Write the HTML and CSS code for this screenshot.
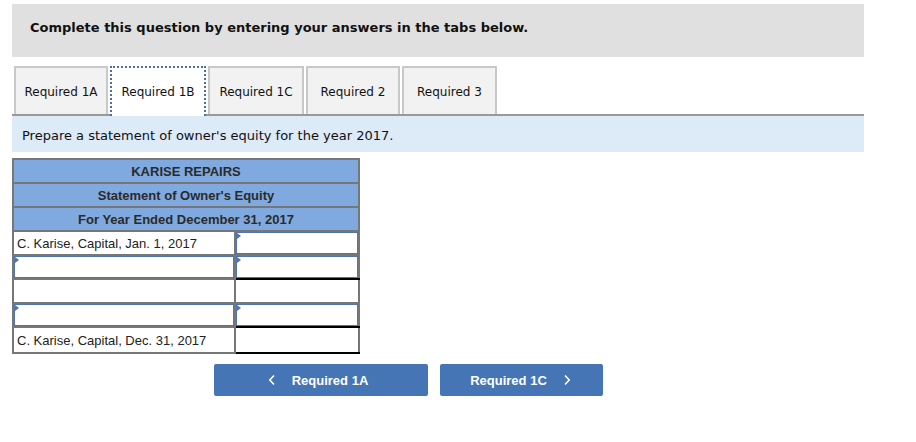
FILE: index.html
```html
<!DOCTYPE html>
<html>
<head>
<meta charset="utf-8">
<link rel="stylesheet" href="styles.css">
</head>
<body>
<div class="page">
  <div class="banner">Complete this question by entering your answers in the tabs below.</div>
  <div class="tabs">
    <div class="tab">Required 1A</div>
    <div class="tab active">Required 1B</div>
    <div class="tab">Required 1C</div>
    <div class="tab">Required 2</div>
    <div class="tab">Required 3</div>
  </div>
  <div class="instr">Prepare a statement of owner's equity for the year 2017.</div>
  <table class="stmt">
    <colgroup><col class="c1"><col class="c2"></colgroup>
    <tr class="hd"><td colspan="2">KARISE REPAIRS</td></tr>
    <tr class="hd"><td colspan="2">Statement of Owner's Equity</td></tr>
    <tr class="hd"><td colspan="2">For Year Ended December 31, 2017</td></tr>
    <tr>
      <td class="lbl">C. Karise, Capital, Jan. 1, 2017</td>
      <td class="amt"><div class="inp"></div></td>
    </tr>
    <tr>
      <td class="lbl"><div class="inp"></div></td>
      <td class="amt line"><div class="inp"></div></td>
    </tr>
    <tr>
      <td class="lbl"></td>
      <td class="amt"></td>
    </tr>
    <tr>
      <td class="lbl"><div class="inp"></div></td>
      <td class="amt line"><div class="inp"></div></td>
    </tr>
    <tr class="last">
      <td class="lbl">C. Karise, Capital, Dec. 31, 2017</td>
      <td class="amt line"></td>
    </tr>
  </table>
  <div class="nav">
    <div class="btn prev">
      <svg width="8" height="12" viewBox="0 0 8 12"><polyline points="6,1.5 1.8,6 6,10.5" fill="none" stroke="#fff" stroke-width="1.6"/></svg>
      <span>Required 1A</span>
    </div>
    <div class="btn next">
      <span>Required 1C</span>
      <svg width="8" height="12" viewBox="0 0 8 12"><polyline points="2,1.5 6.2,6 2,10.5" fill="none" stroke="#fff" stroke-width="1.6"/></svg>
    </div>
  </div>
</div>
</body>
</html>
```

FILE: styles.css
```css
html, body {
  margin: 0;
  padding: 0;
  background: #fff;
}
.page {
  padding: 4px 52px 0 12px;
  width: 852px;
}
.banner {
  background: #e0e0e0;
  height: 53px;
  box-sizing: border-box;
  padding: 16px 0 0 18px;
  font-family: "DejaVu Sans", Verdana, sans-serif;
  font-weight: bold;
  font-size: 13px;
  color: #111;
}
.tabs {
  display: flex;
  gap: 2px;
  margin-top: 9px;
  padding-left: 2px;
  border-bottom: 2px solid #999;
  height: 48px;
}
.tab {
  box-sizing: border-box;
  height: 48px;
  border: 2px solid #c8c8c8;
  border-bottom: none;
  background: #f2f2f2;
  font-family: "DejaVu Sans", Verdana, sans-serif;
  font-size: 12px;
  color: #111;
  display: flex;
  align-items: center;
  justify-content: center;
  padding: 2px 0 0 0;
}
.tab:nth-child(1) { width: 94px; }
.tab:nth-child(2) { width: 96px; }
.tab:nth-child(3) { width: 96px; }
.tab:nth-child(4) { width: 94px; }
.tab:nth-child(5) { width: 95px; }
.tab.active {
  background: #fff;
  border: 2px dotted #4a6fb0;
  border-bottom: none;
  height: 50px;
  padding: 0;
}
.instr {
  background: #ddeaf7;
  height: 36px;
  box-sizing: border-box;
  padding: 12px 0 0 10px;
  font-family: "DejaVu Sans", Verdana, sans-serif;
  font-size: 13px;
  color: #111;
}
.stmt {
  margin-top: 6px;
  border-collapse: collapse;
  border: 2px solid #777;
  width: 348px;
  table-layout: fixed;
  font-family: "Liberation Sans", Arial, sans-serif;
  font-size: 13px;
  color: #222;
}
.c1 { width: 222px; }
.c2 { width: 124px; }
.stmt td {
  border: 2px solid #777;
  height: 24px;
  padding: 0;
  box-sizing: border-box;
}
.stmt .hd td {
  background: #80aadf;
  text-align: center;
  font-weight: bold;
  color: #2a2a2a;
}
.stmt .lbl {
  padding-left: 3px;
  background: #fff;
  white-space: nowrap;
}
.stmt .lbl:has(.inp) { padding-left: 0; }
.stmt .amt {
  background: #fff;
}
.stmt td.line {
  border-bottom: 2px solid #000;
}
.stmt .last td { height: 26px; }
.inp {
  position: relative;
  box-sizing: border-box;
  height: 22px;
  border: 1px solid #4f74ae;
  background: #fff;
}
.inp::before {
  content: "";
  position: absolute;
  left: 0;
  top: 0;
  border-left: 4px solid #4f74ae;
  border-top: 3px solid transparent;
  border-bottom: 3px solid transparent;
}
.nav {
  display: flex;
  gap: 12px;
  margin-top: 10px;
  padding-left: 202px;
}
.btn {
  height: 32px;
  background: #4675b5;
  border-radius: 2px;
  color: #fff;
  font-family: "Liberation Sans", Arial, sans-serif;
  font-weight: bold;
  font-size: 13px;
  display: flex;
  align-items: center;
  justify-content: center;
  gap: 16px;
  box-sizing: border-box;
}
.btn.prev { width: 214px; padding-right: 6px; }
.btn.next { width: 163px; gap: 16px; padding-right: 2px; }
```
